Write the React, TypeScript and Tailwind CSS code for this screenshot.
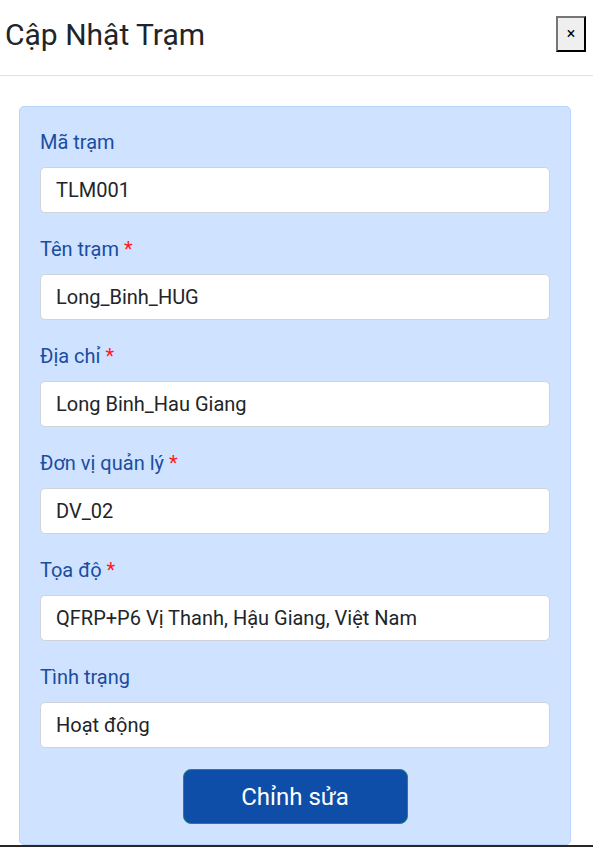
import React from 'react';

const fields = [
  { label: 'Mã trạm', value: 'TLM001', required: false },
  { label: 'Tên trạm', value: 'Long_Binh_HUG', required: true },
  { label: 'Địa chỉ', value: 'Long Binh_Hau Giang', required: true },
  { label: 'Đơn vị quản lý', value: 'DV_02', required: true },
  { label: 'Tọa độ', value: 'QFRP+P6 Vị Thanh, Hậu Giang, Việt Nam', required: true },
  { label: 'Tình trạng', value: 'Hoạt động', required: false },
];

export default function App() {
  return (
    <div className="h-[847px] bg-[#2b2626] font-['Roboto',sans-serif]">
      <div className="h-[845px] bg-white overflow-hidden">
        <div className="flex items-center justify-between h-[76px] border-b border-[#dee2e6] pl-[5px] pr-[7px]">
          <h1 className="text-[30px] leading-none text-[#212529] pb-[6px]">Cập Nhật Trạm</h1>
          <button className="w-[30px] h-[36px] mb-[8px] bg-[#efefef] border-2 border-t-[#767676] border-l-[#767676] border-r-black border-b-black text-[16px] text-black flex items-center justify-center">
            ×
          </button>
        </div>
        <div className="pt-[30px] pl-[19px] pr-[22px]">
          <div className="bg-[#cfe2ff] border border-[#b6d4fe] rounded-[5px] pt-[20px] pb-[20px] px-[20px]">
            {fields.map((f) => (
              <div key={f.label} className="mb-[21px]">
                <label className="block text-[20px] leading-[30px] text-[#1b4d9f] mb-[10px]">
                  {f.label}
                  {f.required && <span className="text-[#ff1a1a]"> *</span>}
                </label>
                <input
                  readOnly
                  value={f.value}
                  className="w-full h-[46px] bg-white border border-[#ced4da] rounded-[5px] px-[15px] text-[20px] text-[#212529] outline-none"
                />
              </div>
            ))}
            <div className="flex justify-center">
              <button className="w-[225px] h-[55px] bg-[#0f4ea8] border border-[#1f8a70] rounded-[8px] text-white text-[24px]">
                Chỉnh sửa
              </button>
            </div>
          </div>
        </div>
      </div>
    </div>
  );
}
